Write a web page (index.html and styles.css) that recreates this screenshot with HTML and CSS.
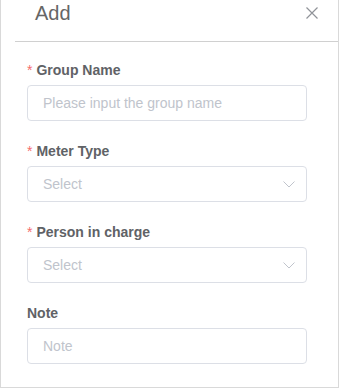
FILE: index.html
```html
<!DOCTYPE html>
<html lang="en">
<head>
    <meta charset="UTF-8">
    <meta name="viewport" content="width=device-width, initial-scale=1.0">
    <title>Add</title>
    <link rel="stylesheet" href="styles.css">
</head>
<body>
    <div class="dialog">
        <div class="dialog-header">
            <span class="dialog-title">Add</span>
            <button class="dialog-close" aria-label="Close">
                <svg width="12" height="12" viewBox="0 0 12 12"><path d="M0.5 0.5 L11.5 11.5 M11.5 0.5 L0.5 11.5" stroke="#909399" stroke-width="1.2" fill="none"/></svg>
            </button>
        </div>
        <form class="dialog-body">
            <div class="form-item">
                <label class="form-label required">Group Name</label>
                <div class="field"><span class="placeholder">Please input the group name</span></div>
            </div>
            <div class="form-item">
                <label class="form-label required">Meter Type</label>
                <div class="field select">
                    <span class="placeholder">Select</span>
                    <svg class="arrow" width="12" height="7" viewBox="0 0 12 7"><path d="M0.5 0.5 L6 6 L11.5 0.5" stroke="#c0c4cc" stroke-width="1" fill="none"/></svg>
                </div>
            </div>
            <div class="form-item">
                <label class="form-label required">Person in charge</label>
                <div class="field select">
                    <span class="placeholder">Select</span>
                    <svg class="arrow" width="12" height="7" viewBox="0 0 12 7"><path d="M0.5 0.5 L6 6 L11.5 0.5" stroke="#c0c4cc" stroke-width="1" fill="none"/></svg>
                </div>
            </div>
            <div class="form-item">
                <label class="form-label">Note</label>
                <div class="field"><span class="placeholder">Note</span></div>
            </div>
        </form>
    </div>
</body>
</html>
```

FILE: styles.css
```css
:root {
    --label-color: #606266;
    --border-color: #dcdfe6;
    --placeholder: #c0c4cc;
}
body {
    margin: 0;
    font-family: 'Liberation Sans', Arial, sans-serif;
    background: #fff;
}
.dialog {
    box-sizing: border-box;
    width: 339px;
    height: 388px;
    border: 1px solid #d9d9d9;
    border-top: none;
    background: #fff;
}
.dialog-header {
    margin-left: 14px;
    height: 41px;
    border-bottom: 1px solid #d0d0d0;
    display: flex;
    align-items: flex-start;
    justify-content: space-between;
}
.dialog-title {
    padding-left: 20px;
    font-size: 20px;
    line-height: 26px;
    color: #666;
}
.dialog-close {
    border: none;
    background: none;
    padding: 0;
    margin: 7px 20px 0 0;
    width: 12px;
    height: 12px;
    display: flex;
    cursor: pointer;
}
.dialog-body {
    padding: 18px 31px 0 26px;
}
.form-item {
    margin-bottom: 20px;
}
.form-label {
    display: block;
    font-size: 14px;
    font-weight: bold;
    line-height: 20px;
    color: var(--label-color);
    margin-bottom: 5px;
}
.form-label.required::before {
    content: '*';
    color: #f56c6c;
    font-weight: normal;
    margin-right: 4px;
}
.field {
    box-sizing: border-box;
    height: 36px;
    border: 1px solid var(--border-color);
    border-radius: 4px;
    padding: 0 11px 0 15px;
    display: flex;
    align-items: center;
    justify-content: space-between;
}
.placeholder {
    font-size: 14px;
    color: var(--placeholder);
}
```
